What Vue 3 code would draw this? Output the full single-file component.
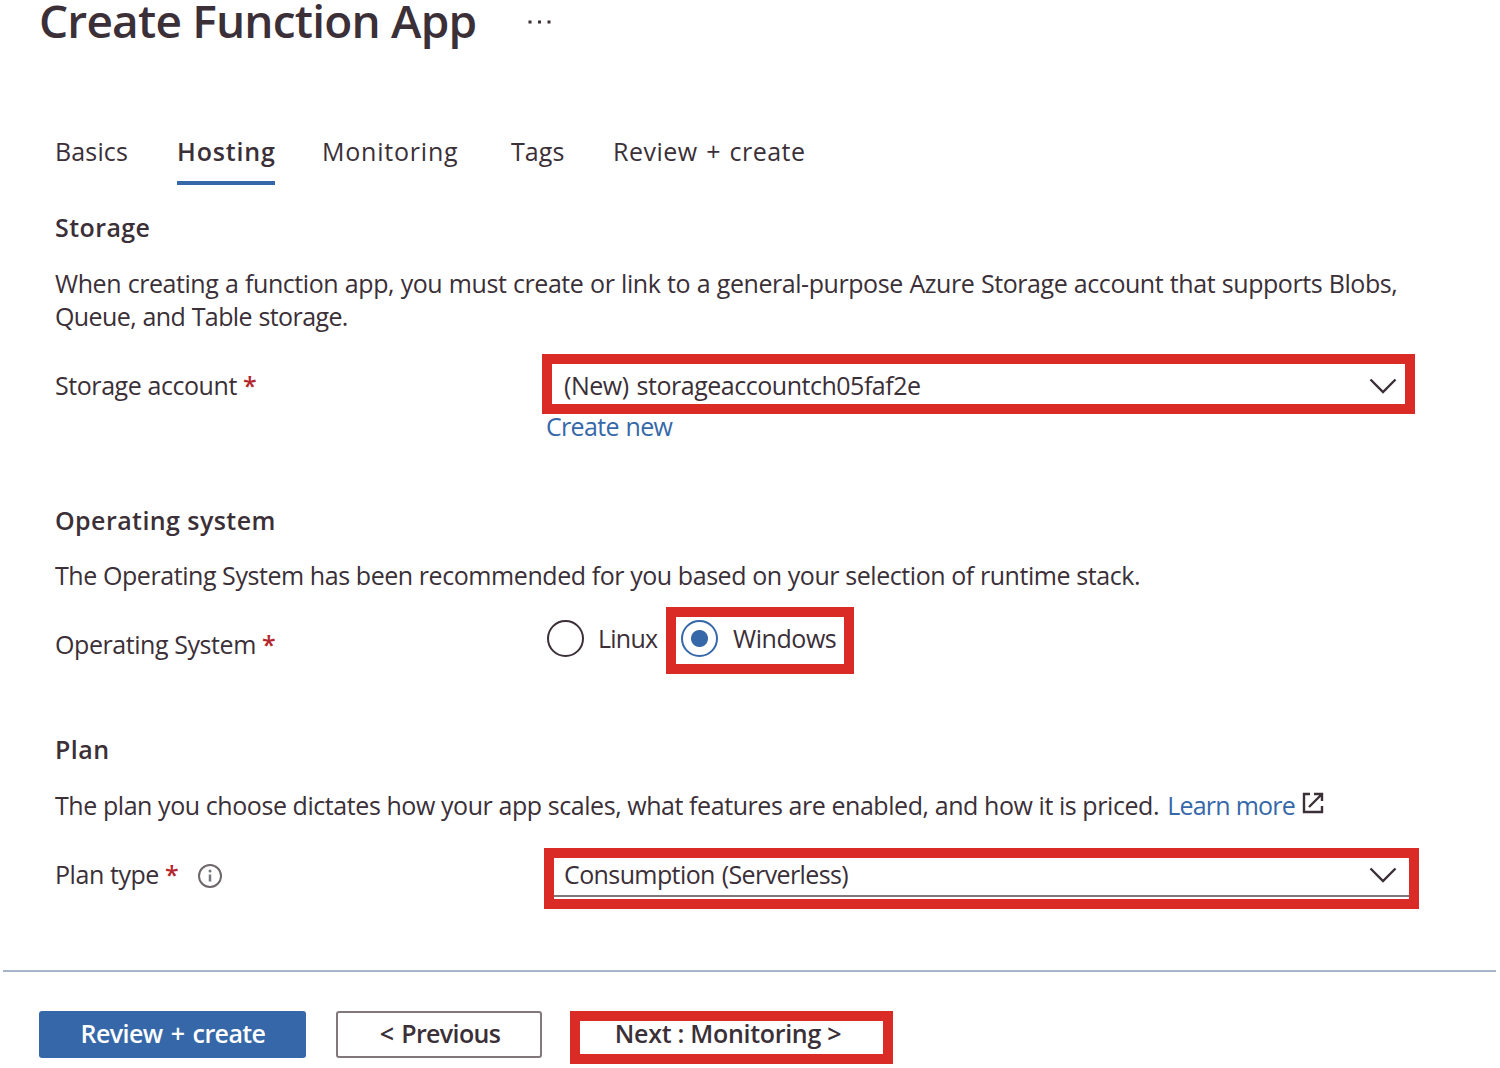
<script setup>
const tabs = [
  { label: 'Basics', cls: 'basics' },
  { label: 'Hosting', cls: 'hosting active' },
  { label: 'Monitoring', cls: 'monitoring' },
  { label: 'Tags', cls: 'tags' },
  { label: 'Review + create', cls: 'review' },
]
</script>

<template>
  <main class="page">
    <header class="header">
      <h1>Create Function App</h1>
      <svg class="more" width="24" height="4" viewBox="0 0 24 4"><path d="M.5.5h3v3h-3zM10 .5h3v3h-3zM19.500.5h3v3h-3z" fill="#3b2f38" /></svg>
    </header>

    <nav class="tabs">
      <a v-for="t in tabs" :key="t.label" class="tab" :class="t.cls">{{ t.label }}</a>
    </nav>

    <section class="storage">
      <h2>Storage</h2>
      <p class="desc intro">When creating a function app, you must create or link to a general-purpose Azure Storage account that supports Blobs,<br /><span class="second">Queue, and Table storage.</span></p>
      <div class="row">
        <label class="label">Storage account <span class="req">*</span></label>
        <div class="field">
          <div class="select account">
            <span>(New) storageaccountch05faf2e</span>
            <svg class="chevron" width="28" height="16" viewBox="0 0 28 16"><path d="M1.500 1.500 14 14 26.500 1.500" /></svg>
          </div>
          <a class="link create">Create new</a>
        </div>
      </div>
    </section>

    <section class="os">
      <h2>Operating system</h2>
      <p class="desc">The Operating System has been recommended for you based on your selection of runtime stack.</p>
      <div class="row">
        <label class="label">Operating System <span class="req">*</span></label>
        <div class="radios">
          <span class="radio"><i class="dot"></i><span class="name linux">Linux</span></span>
          <span class="radio selected"><i class="dot"></i><span class="name">Windows</span></span>
        </div>
      </div>
    </section>

    <section class="plan">
      <h2>Plan</h2>
      <p class="desc">The plan you choose dictates how your app scales, what features are enabled, and how it is priced. <a class="link learn">Learn more</a><svg class="external" width="22" height="22" viewBox="0 0 22 22"><path d="M8 2H2v18h18v-6M12 2h8v7M20 2 7 15" /></svg></p>
      <div class="row">
        <label class="label">Plan type <span class="req">*</span>
          <svg class="info" width="26" height="26" viewBox="0 0 26 26"><circle cx="13" cy="13" r="11" fill="none" stroke="#6f676b" stroke-width="2" /><path d="M13 11.500v7" stroke="#77777f" stroke-width="2.500" /><circle cx="13" cy="8" r="1.500" fill="#77777f" /></svg>
        </label>
        <div class="select type">
          <span>Consumption (Serverless)</span>
          <svg class="chevron" width="28" height="16" viewBox="0 0 28 16"><path d="M1.500 1.500 14 14 26.500 1.500" /></svg>
        </div>
      </div>
    </section>

    <footer class="footer">
      <button class="btn primary">Review + create</button>
      <button class="btn previous">&lt; Previous</button>
      <button class="btn next">Next : Monitoring &gt;</button>
    </footer>
  </main>
</template>

<style>
body { margin: 0; background: #fff; }
</style>

<style scoped>
.page {
  box-sizing: border-box;
  width: 1500px;
  height: 1068px;
  display: flex;
  flex-direction: column;
  font: 400 25px/34px "Open Sans", "Noto Sans", sans-serif;
  letter-spacing: -0.43px;
  color: #3b2f38;
  white-space: nowrap;
}
h1, h2, p { margin: 0; }

.header { display: flex; height: 134px; padding-left: 39px; }
h1 { width: 489px; height: 40px; font-size: 46px; line-height: 40px; font-weight: 600; letter-spacing: -0.8px; }
.more { margin-top: 20px; }

.tabs { display: flex; height: 76px; padding-left: 55px; }
.tab { box-sizing: border-box; height: 51px; }
.basics { width: 122px; letter-spacing: 0.15px; }
.hosting { width: 98px; margin-right: 47px; letter-spacing: 0.85px; }
.monitoring { width: 189px; letter-spacing: 0.78px; }
.tags { width: 102px; letter-spacing: 0.1px; }
.review { letter-spacing: 0.5px; word-spacing: 1.500px; }
.active { border-bottom: 4px solid #3668a9; font-weight: 600; }

section { padding-left: 55px; }
.storage { height: 293px; }
.os { height: 229px; }
.plan { height: 238px; }
h2 { height: 55px; font-size: 25px; font-weight: 600; letter-spacing: 0.43px; }
.desc { height: 69px; }
.plan .desc { height: 70px; padding-top: 1px; box-sizing: border-box; }
.intro { height: 101px; margin-top: 2px; line-height: 33px; letter-spacing: -0.44px; word-spacing: 0.57px; }
.second { letter-spacing: -0.6px; }
.row { display: flex; }
.label { width: 487px; }
.req { color: #b3262b; font-weight: 600; }
.link { color: #3668a9; }

.field { display: flex; flex-direction: column; margin-top: -14px; }
.select {
  box-sizing: border-box;
  display: flex;
  justify-content: space-between;
  border: 10px solid #da2b27;
}
.account { width: 873px; height: 60px; padding: 4px 8px 0 12px; letter-spacing: -0.48px; word-spacing: 2px; }
.type { width: 875px; height: 61px; margin: -9px 0 0 2px; padding: 0 12px 0 10px; letter-spacing: -0.6px; word-spacing: 1px; background: linear-gradient(#817779, #817779) 0 37px / 100% 2px no-repeat; background-origin: padding-box; }
.type span { margin-top: -1px; }
.chevron { margin-top: 10px; fill: none; stroke: #3b2f38; stroke-width: 2.400; }
.type .chevron { margin-top: 9px; }
.create { margin: -5px 0 0 4px; letter-spacing: -0.68px; word-spacing: 1px; }

.radios { display: flex; margin-top: -20px; }
.radio { display: flex; padding-top: 13px; }
.dot { box-sizing: border-box; width: 37px; height: 37px; margin: 0 14px 0 5px; border: 2.500px solid #3b2f38; border-radius: 50%; }
.name { padding-top: 1px; }
.linux { width: 68px; letter-spacing: -0.75px; }
.selected { box-sizing: border-box; width: 188px; height: 67px; padding-top: 3px; border: 10px solid #da2b27; }
.selected .dot { margin-right: 15px; border-color: #3668a9; background: radial-gradient(circle, #3668a9 8px, transparent 9px); }

.learn { margin-left: 2px; letter-spacing: -0.75px; }
.external { margin-left: 7px; vertical-align: 1px; fill: none; stroke: #3b2f38; stroke-width: 2.400; }
.info { margin-left: 19px; vertical-align: -5px; }

.footer { display: flex; height: 98px; margin: 0 4px 0 3px; padding: 39px 0 0 36px; border-top: 2px solid #a8b4c8; box-sizing: border-box; }
.btn { box-sizing: border-box; height: 47px; padding: 0; font: 600 25px/34px "Open Sans", "Noto Sans", sans-serif; color: #3b2f38; background: #fff; }
.primary { width: 267px; margin-right: 30px; padding: 0 0 4px 1px; border: 0; border-radius: 3px; background: #3668a9; color: #fff; letter-spacing: -0.6px; word-spacing: 2.300px; }
.previous { width: 206px; margin-right: 28px; padding: 0 0 4px 2px; border: 2px solid #82787a; border-radius: 3px; letter-spacing: -0.65px; word-spacing: 2px; }
.next { width: 323px; height: 53px; border: 10px solid #da2b27; padding: 0 7px 9px 0; line-height: 24px; letter-spacing: -0.3px; }
</style>
